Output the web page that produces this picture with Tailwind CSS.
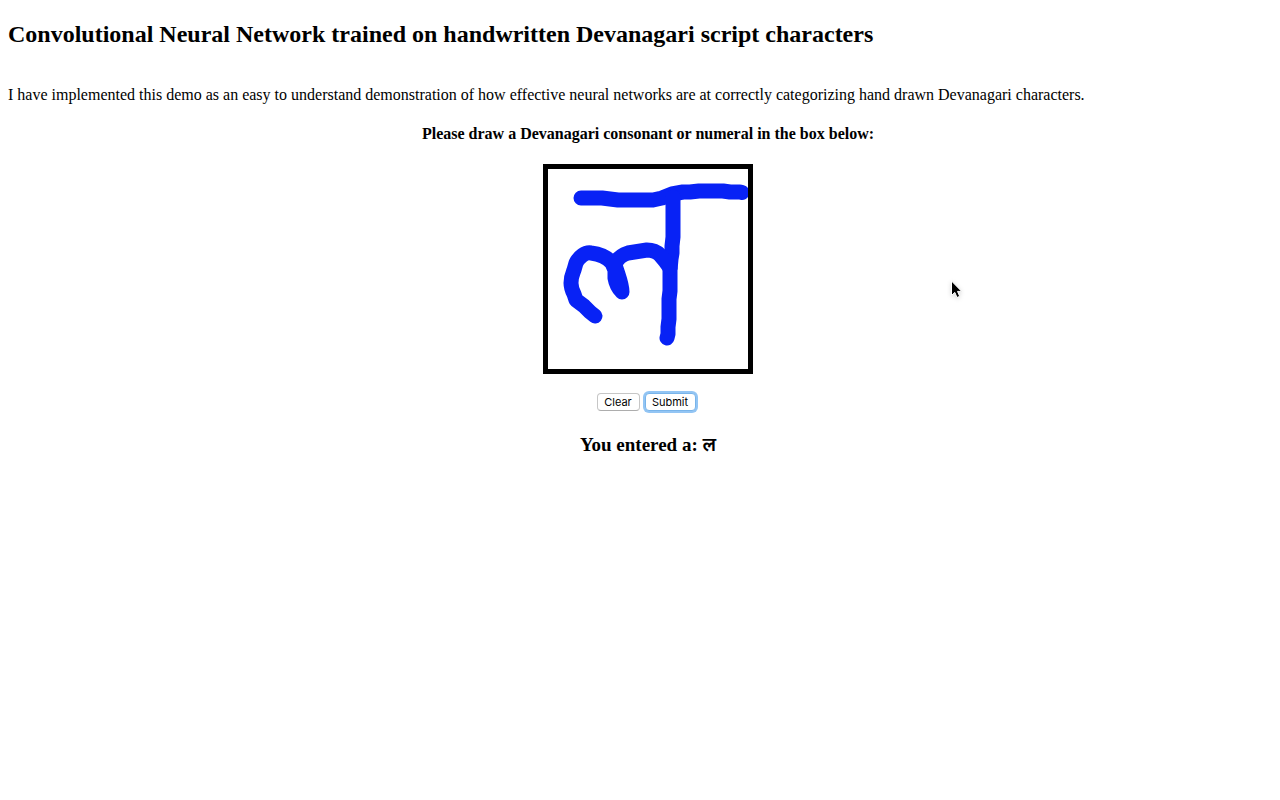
<!DOCTYPE html>
<html lang="en">
<head>
<meta charset="utf-8">
<title>Devanagari CNN demo</title>
<script src="https://cdn.jsdelivr.net/npm/@tailwindcss/browser@4"></script>
</head>
<body class="bg-white text-black font-['Liberation_Serif','Noto_Sans_Devanagari','Noto_Sans',serif]">
<header class="px-2 pt-5">
  <h1 class="text-2xl leading-7 font-bold">Convolutional Neural Network trained on handwritten Devanagari script characters</h1>
  <p class="mt-9 text-base leading-[22px]">I have implemented this demo as an easy to understand demonstration of how effective neural networks are at correctly categorizing hand drawn Devanagari characters.</p>
</header>
<main class="flex flex-col items-center pl-4">
  <h2 class="mt-[18px] text-base leading-5 font-bold">Please draw a Devanagari consonant or numeral in the box below:</h2>
  <svg class="mt-5 box-content size-[200px] border-5 border-black" viewBox="0 0 200 200" fill="none" stroke="#0822f5" stroke-width="15" stroke-linecap="round" stroke-linejoin="round" role="img" aria-label="Drawing area">
    <path d="M33 29H54L62 30L70 31H105L114 29L124 25L135 23H142L151 22H175L182 23H192L194 23.500"/>
    <path d="M125 28V68L124 77V84L123 90L122 101V122L121 130V150L120 158V165L119 169"/>
    <path d="M47 147L42 143L36 137L28 131L26 125C24 121 23 118 23 114C23 108 24 106 26 101L28 94C31 88 37 83 43 84C52 85 59 88 64 94L67 101V109C68 115 70 119 74 123C74 117 72 111 70 105L67 96C69 89 74 86 80 84L99 81C105 81 109 83 112 86L117 92L122 99"/>
  </svg>
  <div class="mt-[19px] flex gap-[5px] pr-1 font-['Inter','Liberation_Sans',sans-serif] text-[11px] leading-4">
    <button type="button" class="h-[18px] w-[43px] rounded-sm border border-[#c6c6c6] border-b-[#adadad] bg-white">Clear</button>
    <button type="button" class="h-[18px] w-[51px] rounded-sm border border-[#78b4ea] bg-white ring-2 ring-[#93c5f4]">Submit</button>
  </div>
  <h3 class="mt-6 text-[19px] leading-5 font-bold">You entered a: <span lang="hi" class="font-semibold">ल</span></h3>
</main>
<svg class="pointer-events-none absolute left-[949px] top-[279px] h-[22px] w-[15px] drop-shadow-sm" viewBox="0 0 15 22" aria-hidden="true">
  <path d="M2.500 2V16.500L5.800 13.400L8 18.500L10.700 17.300L8.500 12.400H12.700Z" fill="#000" stroke="#fff" stroke-width="1"/>
</svg>
</body>
</html>
